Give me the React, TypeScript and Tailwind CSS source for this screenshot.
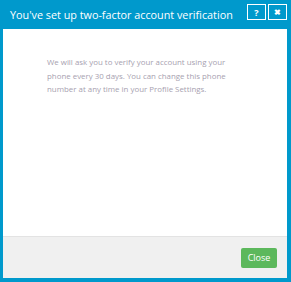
export default function App() {
  return (
    <div className="w-[291px] h-[282px] bg-[#0099cc] flex flex-col" style={{ fontFamily: '"Open Sans", sans-serif' }}>
      <div className="h-[29px] flex items-start shrink-0">
        <div className="pl-[10px] pt-[8px] text-[10.8px] leading-[14px] text-white whitespace-nowrap">
          You've set up two-factor account verification
        </div>
        <div className="ml-auto mr-[4px] mt-[4px] flex gap-[2px] shrink-0">
          <div className="w-[19px] h-[16px] border border-white flex items-center justify-center text-white text-[9px] font-bold leading-none">?</div>
          <div className="w-[19px] h-[16px] border border-white flex items-center justify-center text-white text-[8px] font-bold leading-none">✖</div>
        </div>
      </div>
      <div className="ml-[3px] mr-[4px] flex-1 flex flex-col bg-white">
        <div className="flex-1 border-b border-[#e3e3e3] pl-[44px] pt-[27px]">
          <p className="w-[182px] text-[7.9px] leading-[13.5px] text-[#a79fb0]">
            We will ask you to verify your account using your phone every 30 days. You can change this phone number at any time in your Profile Settings.
          </p>
        </div>
        <div className="h-[41px] bg-[#f0f0f0] flex items-center justify-end pr-[10px] shrink-0">
          <div className="w-[36px] h-[20px] bg-[#5cb85c] rounded-[2px] text-white text-[9px] flex items-center justify-center">Close</div>
        </div>
      </div>
      <div className="h-[4px] shrink-0" />
    </div>
  );
}
